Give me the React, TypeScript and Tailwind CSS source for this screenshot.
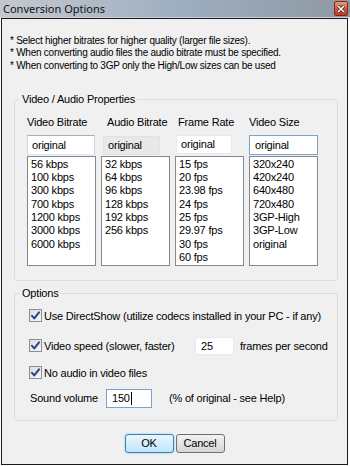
import React from "react"

const videoBitrates = ["56 kbps", "100 kbps", "300 kbps", "700 kbps", "1200 kbps", "3000 kbps", "6000 kbps"]
const audioBitrates = ["32 kbps", "64 kbps", "96 kbps", "128 kbps", "192 kbps", "256 kbps"]
const frameRates = ["15 fps", "20 fps", "23.98 fps", "24 fps", "25 fps", "29.97 fps", "30 fps", "60 fps"]
const videoSizes = ["320x240", "420x240", "640x480", "720x480", "3GP-High", "3GP-Low", "original"]

function Check() {
  return (
    <span className="flex h-[13px] w-[13px] shrink-0 items-center justify-center border border-[#8e8f8f] bg-gradient-to-br from-[#dcdcdc] to-[#f8f8f8]">
      <svg width="11" height="11" viewBox="0 0 11 11">
        <path d="M2 5.8 L4.3 8.4 L9 2.4" fill="none" stroke="#2b3f8f" strokeWidth="2" strokeLinecap="round" strokeLinejoin="round" />
      </svg>
    </span>
  )
}

function ListCol({ items, label, labelPad, input }: { items: string[]; label: string; labelPad: string; input: React.ReactNode }) {
  return (
    <div className="flex w-[69px] flex-col">
      <div className={`h-[13px] leading-[13px] ${labelPad}`}>{label}</div>
      <div className="mt-[6px] h-[21px]">{input}</div>
      <div className="h-[110px] border border-[#828790] bg-white pl-[3px] pt-[1px]">
        {items.map((it) => (
          <div key={it} className="h-[13.3px] leading-[13.3px]">
            {it}
          </div>
        ))}
      </div>
    </div>
  )
}

export default function App() {
  return (
    <div
      className="h-[466px] w-[350px] bg-white text-[11px] tracking-[-0.2px] text-black"
      style={{ fontFamily: '"Liberation Sans", Arial, sans-serif' }}
    >
      {/* title bar */}
      <div className="flex h-[18px] items-center justify-between border-b border-[#c9d1da] bg-gradient-to-r from-[#c3c8ce] via-[#9fafc0] to-[#8e98a3] pl-[3px] pr-[2px]">
        <span className="text-[11px] leading-[16px] tracking-normal text-[#111]" style={{ fontFamily: '"Noto Sans", "Open Sans", sans-serif' }}>
          Conversion Options
        </span>
        <span className="flex h-[15px] w-[14px] items-center justify-center rounded-[2px] border border-[#7a2b1c] bg-gradient-to-b from-[#e79a7e] via-[#d35a3c] to-[#c0391c]">
          <svg width="8" height="8" viewBox="0 0 8 8">
            <path d="M1 1 L7 7 M7 1 L1 7" stroke="#3a1a14" strokeWidth="3" />
            <path d="M1 1 L7 7 M7 1 L1 7" stroke="#fff" strokeWidth="1.6" />
          </svg>
        </span>
      </div>

      {/* window body */}
      <div className="ml-[1px] h-[447px] w-[347px] border border-[#1a1a1a] bg-[#f0f0f0]">
        <div className="pl-[8px] pt-[16px] text-[10px] leading-[12.3px] tracking-[-0.25px]">
          <div>* Select higher bitrates for higher quality (larger file sizes).</div>
          <div>* When converting audio files the audio bitrate must be specified.</div>
          <div>* When converting to 3GP only the High/Low sizes can be used</div>
        </div>

        <fieldset className="ml-[12px] mt-[21px] w-[324px] rounded-[3px] border border-[#d5dfe5] pb-[14px] pt-[10px]">
          <legend className="ml-[5px] px-[2px] leading-[13px]">Video / Audio Properties</legend>
          <div className="flex gap-[5px] pl-[12px]">
            <ListCol
              items={videoBitrates}
              label="Video Bitrate"
              labelPad=""
              input={<div className="h-[20px] w-[68px] border border-[#abadb3] border-l-[#c7d4e4] border-r-[#c7d4e4] border-b-[#dfe6ef] bg-white pl-[4px] leading-[18px]">original</div>}
            />
            <ListCol
              items={audioBitrates}
              label="Audio Bitrate"
              labelPad="pl-[6px]"
              input={<div className="ml-[2px] mt-[1px] h-[19px] w-[57px] rounded-[1px] border border-[#e2e2e2] bg-[#e8e8e8] pl-[4px] leading-[17px]">original</div>}
            />
            <ListCol
              items={frameRates}
              label="Frame Rate"
              labelPad="pl-[3px]"
              input={<div className="ml-[1px] h-[19px] w-[56px] border border-[#e3e9ef] bg-white pl-[4px] leading-[17px]">original</div>}
            />
            <ListCol
              items={videoSizes}
              label="Video Size"
              labelPad=""
              input={<div className="h-[20px] w-[69px] border border-[#7da2ce] bg-white pl-[5px] leading-[18px]">original</div>}
            />
          </div>
        </fieldset>

        <fieldset className="ml-[12px] mt-[6px] w-[324px] rounded-[3px] border border-[#d5dfe5] pb-[12px] pl-[14px] pt-[8px]">
          <legend className="-ml-[9px] px-[2px] leading-[13px]">Options</legend>
          <div className="flex h-[16px] items-center">
            <Check />
            <span className="ml-[2px]">Use DirectShow (utilize codecs installed in your PC - if any)</span>
          </div>
          <div className="mt-[13px] flex h-[18px] items-center">
            <Check />
            <span className="ml-[2px] w-[151px]">Video speed (slower, faster)</span>
            <div className="h-[18px] w-[39px] border border-[#e3e9ef] bg-white pl-[5px] leading-[16px]">25</div>
            <span className="ml-[6px]">frames per second</span>
          </div>
          <div className="mt-[10px] flex h-[16px] items-center">
            <Check />
            <span className="ml-[2px]">No audio in video files</span>
          </div>
          <div className="mt-[8px] flex h-[19px] items-center pl-[1px]">
            <span className="w-[76px]">Sound volume</span>
            <div className="flex h-[19px] w-[46px] items-center border border-[#7da2ce] bg-white pl-[5px]">
              150<span className="ml-[1px] h-[13px] w-[1px] bg-black" />
            </div>
            <span className="ml-[17px]">(% of original - see Help)</span>
          </div>
        </fieldset>

        <div className="mt-[13px] flex justify-center gap-[2px]">
          <button className="h-[19px] w-[49px] rounded-[3px] border border-[#3c7fb1] bg-gradient-to-b from-[#eaf6fd] to-[#bee6fd] leading-[17px] shadow-[0_0_2px_#6fc3f0]">
            OK
          </button>
          <button className="h-[19px] w-[49px] rounded-[3px] border border-[#707070] bg-gradient-to-b from-[#f2f2f2] to-[#d5d5d5] leading-[17px]">
            Cancel
          </button>
        </div>
      </div>
    </div>
  )
}
